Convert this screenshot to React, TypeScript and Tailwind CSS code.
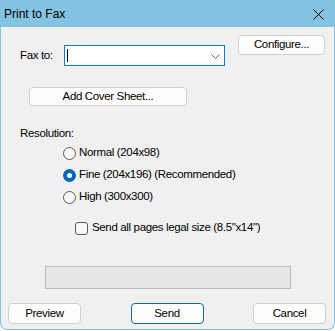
import React from "react";

const body = { fontFamily: "'Liberation Sans', Arial, sans-serif" };

function Btn({ children, className = "", primary = false }: { children: React.ReactNode; className?: string; primary?: boolean }) {
  return (
    <div
      className={
        "flex items-center justify-center rounded-[4px] bg-[#fdfdfd] text-[11.5px] tracking-[-0.35px] text-black " +
        (primary ? "border border-[#0067c0] " : "border border-[#d0d0d0] ") +
        className
      }
    >
      {children}
    </div>
  );
}

function Radio({ checked, label }: { checked?: boolean; label: string }) {
  return (
    <div className="flex h-[22px] items-center">
      <div className="ml-[62px] flex h-[13px] w-[13px] items-center justify-center">
        {checked ? (
          <div className="flex h-[13px] w-[13px] items-center justify-center rounded-full bg-[#0067c0]">
            <div className="h-[5px] w-[5px] rounded-full bg-white" />
          </div>
        ) : (
          <div className="h-[13px] w-[13px] rounded-full border border-[#5a5a5a] bg-[#f7f7f7]" />
        )}
      </div>
      <span className="ml-[3px] text-[11.5px] tracking-[-0.35px] text-black">{label}</span>
    </div>
  );
}

export default function App() {
  return (
    <div className="h-[331px] w-[335px] bg-white">
      <div className="flex h-[330px] w-[335px] flex-col overflow-hidden rounded-b-[7px] border-x border-b border-[#84c4e2] bg-[#f0f0f0]" style={body}>
        <div className="-mx-px flex h-[27px] shrink-0 items-center justify-between bg-[#84c4e2] pl-[4px] pr-[11px]">
          <span className="text-[12px] text-black">Print to Fax</span>
          <svg width="11" height="11" viewBox="0 0 11 11" className="mt-[1px]">
            <path d="M0.5 0.5 L10.5 10.5 M10.5 0.5 L0.5 10.5" stroke="#000" strokeWidth="1" fill="none" />
          </svg>
        </div>

        <div className="flex pt-[8px]">
          <div className="mt-[10px] flex items-center">
            <span className="ml-[19px] w-[44px] text-[11.5px] tracking-[-0.35px] text-black">Fax to:</span>
            <div className="relative flex h-[21px] w-[161px] items-center border border-[#0078d7] bg-white">
              <div className="ml-[2px] h-[13px] w-px bg-black" />
              <svg width="9" height="5" viewBox="0 0 9 5" className="absolute right-[4px] top-[8px]">
                <path d="M0.5 0.5 L4.5 4.5 L8.5 0.5" stroke="#606060" strokeWidth="1" fill="none" />
              </svg>
            </div>
          </div>
          <Btn className="ml-[13px] h-[20px] w-[87px]">Configure...</Btn>
        </div>

        <Btn className="ml-[28px] mt-[21px] h-[19px] w-[158px]">Add Cover Sheet...</Btn>

        <div className="ml-[19px] mt-[19px] h-[16px] text-[11.5px] leading-[16px] tracking-[-0.35px] text-black">Resolution:</div>

        <div className="mt-[1px] flex flex-col">
          <Radio label="Normal (204x98)" />
          <Radio checked label="Fine (204x196) (Recommended)" />
          <Radio label="High (300x300)" />
        </div>

        <div className="mt-[12px] flex h-[16px] items-center">
          <div className="ml-[74px] h-[13px] w-[13px] rounded-[3px] border border-[#5a5a5a] bg-[#f7f7f7]" />
          <span className="ml-[4px] text-[11.5px] tracking-[-0.35px] text-black">Send all pages legal size (8.5"x14")</span>
        </div>

        <div className="ml-[44px] mt-[30px] h-[23px] w-[246px] border border-[#bcbcbc] bg-[#e6e6e6]" />

        <div className="mt-[14px] flex justify-between pl-[7px] pr-[8px]">
          <Btn className="h-[21px] w-[73px]">Preview</Btn>
          <Btn primary className="h-[21px] w-[73px]">Send</Btn>
          <Btn className="h-[21px] w-[73px]">Cancel</Btn>
        </div>
      </div>
    </div>
  );
}
